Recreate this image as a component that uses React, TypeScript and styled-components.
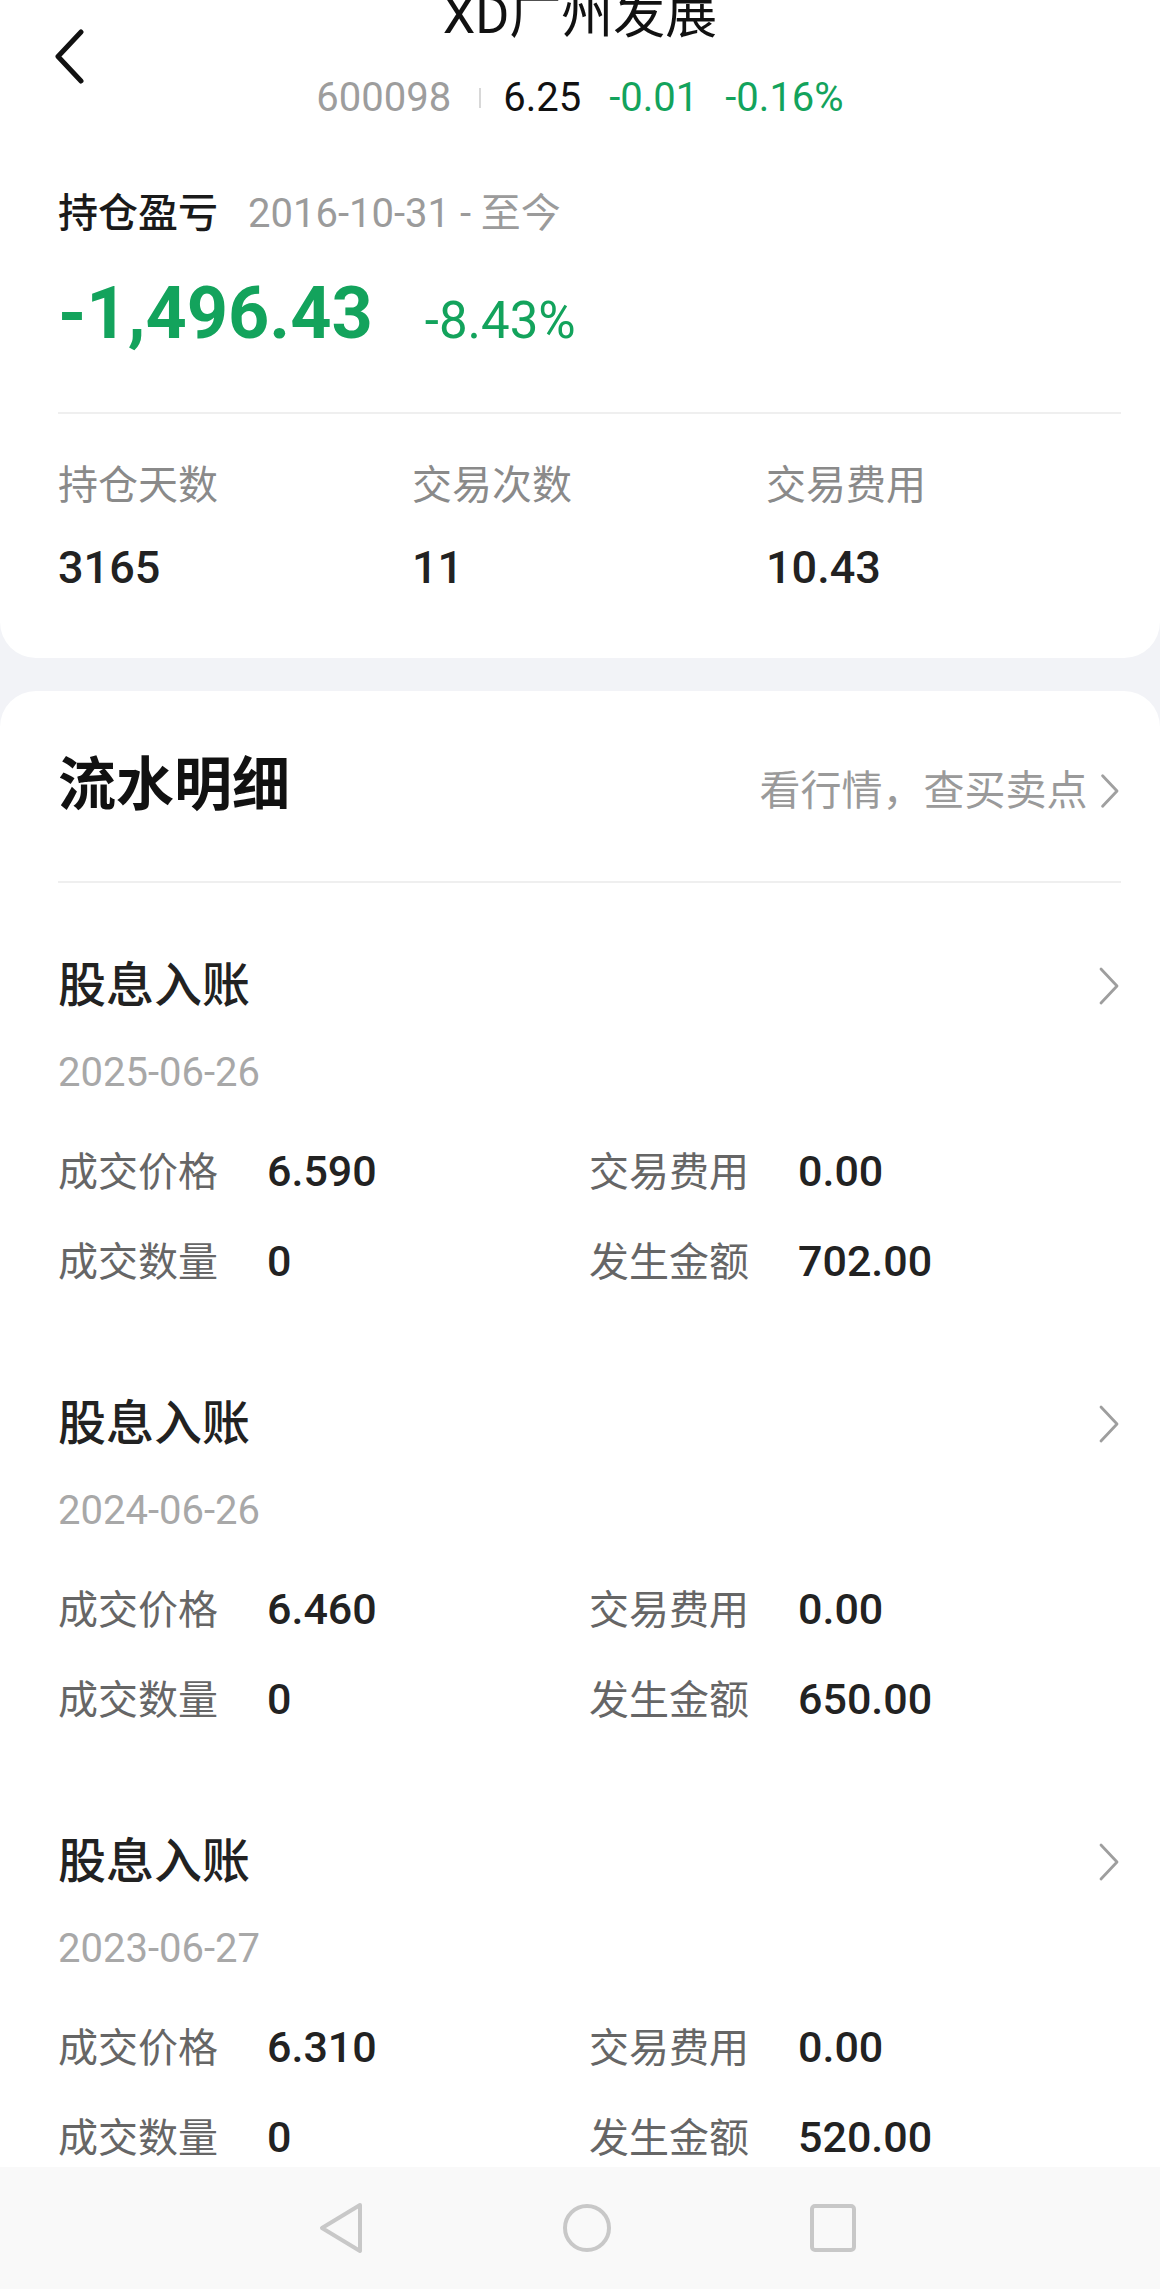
import React from "react";
import styled, { createGlobalStyle } from "styled-components";

const GREEN = "#13a35c";

const Global = createGlobalStyle`
  html, body { margin: 0; padding: 0; }
  body {
    font-family: Roboto, "Noto Sans CJK SC", "Noto Sans", sans-serif;
    background: #f2f3f7;
    -webkit-font-smoothing: antialiased;
  }
  * { box-sizing: border-box; }
`;

const Page = styled.div`
  width: 1160px;
  height: 2289px;
  display: flex;
  flex-direction: column;
  background: #f2f3f7;
  overflow: hidden;
`;

const Scroll = styled.div`
  flex: 1;
  min-height: 0;
  overflow: hidden;
  display: flex;
  flex-direction: column;
  gap: 33px;
`;

const TopCard = styled.section`
  display: flex;
  flex-direction: column;
  background: #fff;
  border-radius: 0 0 36px 36px;
  padding: 0 39px 63px 58px;
`;

const Header = styled.header`
  display: grid;
  grid-template-columns: 1fr auto 1fr;
  margin: -10px -39px 0 -58px;
`;

const BackButton = styled.div`
  grid-column: 1;
  grid-row: 1;
  align-self: center;
  padding-left: 54px;
  padding-top: 2px;
  display: flex;
`;

const HeaderCenter = styled.div`
  grid-column: 2;
  grid-row: 1;
  display: flex;
  flex-direction: column;
  align-items: center;
`;

const Title = styled.h1`
  margin: 0;
  font-size: 52px;
  line-height: 52px;
  font-weight: 400;
  color: #111;
`;

const Quote = styled.div`
  margin-top: 32px;
  display: flex;
  align-items: center;
  font-size: 40px;
  line-height: 48px;
`;

const QuoteItem = styled.span<{ $color: string; $gap?: number }>`
  color: ${(p) => p.$color};
  margin-left: ${(p) => p.$gap ?? 0}px;
`;

const Sep = styled.span`
  width: 2px;
  height: 20px;
  background: #d8d8d8;
  margin: 0 22px 0 28px;
`;

const HoldRow = styled.div`
  margin-top: 68px;
  display: flex;
  align-items: baseline;
  gap: 30px;
  font-size: 40px;
  line-height: 48px;
`;

const HoldLabel = styled.span`
  color: #1a1a1a;
  font-weight: 500;
`;

const HoldDate = styled.span`
  color: #9b9b9b;
`;

const ProfitRow = styled.div`
  margin-top: 36px;
  display: flex;
  align-items: baseline;
  gap: 52px;
  color: ${GREEN};
`;

const ProfitValue = styled.span`
  font-size: 72px;
  line-height: 80px;
  font-weight: 700;
`;

const ProfitPct = styled.span`
  font-size: 51px;
  line-height: 56px;
`;

const Divider = styled.div<{ $top: number }>`
  height: 2px;
  background: #efefef;
  margin-top: ${(p) => p.$top}px;
`;

const Stats = styled.div`
  margin-top: 48px;
  display: grid;
  grid-template-columns: repeat(3, 354px);
`;

const Stat = styled.div`
  display: flex;
  flex-direction: column;
  gap: 31px;
`;

const StatLabel = styled.span`
  font-size: 40px;
  line-height: 48px;
  color: #8a8a8a;
`;

const StatValue = styled.span`
  font-size: 45px;
  line-height: 54px;
  font-weight: 500;
  color: #222;
`;

const FlowCard = styled.section`
  flex: 1;
  background: #fff;
  border-radius: 36px 36px 0 0;
  padding: 62px 39px 0 58px;
  display: flex;
  flex-direction: column;
`;

const FlowHeader = styled.div`
  display: flex;
  align-items: baseline;
  justify-content: space-between;
`;

const FlowTitle = styled.h2`
  margin: 0;
  font-size: 58px;
  line-height: 64px;
  font-weight: 700;
  color: #111;
`;

const FlowLink = styled.span`
  display: flex;
  align-items: center;
  gap: 12px;
  font-size: 41px;
  line-height: 48px;
  color: #9a9a9a;
`;

const List = styled.div`
  margin-top: 75px;
  display: flex;
  flex-direction: column;
  gap: 107px;
`;

const Item = styled.article`
  display: flex;
  flex-direction: column;
`;

const ItemHead = styled.div`
  display: flex;
  align-items: center;
  justify-content: space-between;
`;

const ItemTitle = styled.span`
  font-size: 48px;
  line-height: 56px;
  font-weight: 500;
  color: #222;
`;

const ItemDate = styled.span`
  margin-top: 35px;
  font-size: 40px;
  line-height: 48px;
  color: #a8a8a8;
`;

const Fields = styled.div`
  margin-top: 48px;
  display: grid;
  grid-template-columns: 209px 322px 209px 1fr;
  row-gap: 36px;
  align-items: baseline;
`;

const FieldLabel = styled.span`
  font-size: 40px;
  line-height: 52px;
  color: #666;
`;

const FieldValue = styled.span`
  font-size: 43px;
  line-height: 52px;
  font-weight: 500;
  color: #222;
`;

const NavBar = styled.nav`
  height: 122px;
  flex: none;
  background: #f9f9f9;
  display: flex;
  align-items: center;
  justify-content: center;
  gap: 196px;
  padding-left: 14px;
`;

const NavIcon = styled.svg`
  width: 50px;
  height: 52px;
  display: block;
`;

const Chevron = ({ size, color, stroke }: { size: number; color: string; stroke: number }) => (
  <svg width={size * 0.6} height={size} viewBox="0 0 24 40" fill="none">
    <path d="M4 3 L20 20 L4 37" stroke={color} strokeWidth={stroke} strokeLinecap="round" strokeLinejoin="round" />
  </svg>
);

type Tx = { date: string; price: string; fee: string; qty: string; amount: string };

const txs: Tx[] = [
  { date: "2025-06-26", price: "6.590", fee: "0.00", qty: "0", amount: "702.00" },
  { date: "2024-06-26", price: "6.460", fee: "0.00", qty: "0", amount: "650.00" },
  { date: "2023-06-27", price: "6.310", fee: "0.00", qty: "0", amount: "520.00" },
];

export default function App() {
  return (
    <>
      <Global />
      <Page>
        <Scroll>
          <TopCard>
            <Header>
              <BackButton>
                <svg width="30" height="56" viewBox="0 0 30 56" fill="none">
                  <path d="M27 3 L4 27.5 L27 52" stroke="#111" strokeWidth="5" strokeLinecap="round" strokeLinejoin="round" />
                </svg>
              </BackButton>
              <HeaderCenter>
                <Title>XD广州发展</Title>
                <Quote>
                  <QuoteItem $color="#9d9d9d">600098</QuoteItem>
                  <Sep />
                  <QuoteItem $color="#111">6.25</QuoteItem>
                  <QuoteItem $color={GREEN} $gap={28}>-0.01</QuoteItem>
                  <QuoteItem $color={GREEN} $gap={27}>-0.16%</QuoteItem>
                </Quote>
              </HeaderCenter>
            </Header>
            <HoldRow>
              <HoldLabel>持仓盈亏</HoldLabel>
              <HoldDate>2016-10-31 - 至今</HoldDate>
            </HoldRow>
            <ProfitRow>
              <ProfitValue>-1,496.43</ProfitValue>
              <ProfitPct>-8.43%</ProfitPct>
            </ProfitRow>
            <Divider $top={58} />
            <Stats>
              <Stat>
                <StatLabel>持仓天数</StatLabel>
                <StatValue>3165</StatValue>
              </Stat>
              <Stat>
                <StatLabel>交易次数</StatLabel>
                <StatValue>11</StatValue>
              </Stat>
              <Stat>
                <StatLabel>交易费用</StatLabel>
                <StatValue>10.43</StatValue>
              </Stat>
            </Stats>
          </TopCard>
          <FlowCard>
            <FlowHeader>
              <FlowTitle>流水明细</FlowTitle>
              <FlowLink>
                看行情，查买卖点
                <Chevron size={36} color="#a0a0a0" stroke={3.2} />
              </FlowLink>
            </FlowHeader>
            <Divider $top={64} />
            <List>
              {txs.map((t) => (
                <Item key={t.date}>
                  <ItemHead>
                    <ItemTitle>股息入账</ItemTitle>
                    <Chevron size={40} color="#9e9e9e" stroke={2.8} />
                  </ItemHead>
                  <ItemDate>{t.date}</ItemDate>
                  <Fields>
                    <FieldLabel>成交价格</FieldLabel>
                    <FieldValue>{t.price}</FieldValue>
                    <FieldLabel>交易费用</FieldLabel>
                    <FieldValue>{t.fee}</FieldValue>
                    <FieldLabel>成交数量</FieldLabel>
                    <FieldValue>{t.qty}</FieldValue>
                    <FieldLabel>发生金额</FieldLabel>
                    <FieldValue>{t.amount}</FieldValue>
                  </Fields>
                </Item>
              ))}
            </List>
          </FlowCard>
        </Scroll>
        <NavBar>
          <NavIcon viewBox="0 0 50 52" fill="none">
            <path d="M44 3 L6 26 L44 49 Z" stroke="#c8c8c8" strokeWidth="4" strokeLinejoin="round" />
          </NavIcon>
          <NavIcon viewBox="0 0 50 52" fill="none">
            <circle cx="25" cy="26" r="22" stroke="#c8c8c8" strokeWidth="4" />
          </NavIcon>
          <NavIcon viewBox="0 0 50 52" fill="none">
            <rect x="4" y="4" width="42" height="44" rx="3" stroke="#c8c8c8" strokeWidth="4" />
          </NavIcon>
        </NavBar>
      </Page>
    </>
  );
}
